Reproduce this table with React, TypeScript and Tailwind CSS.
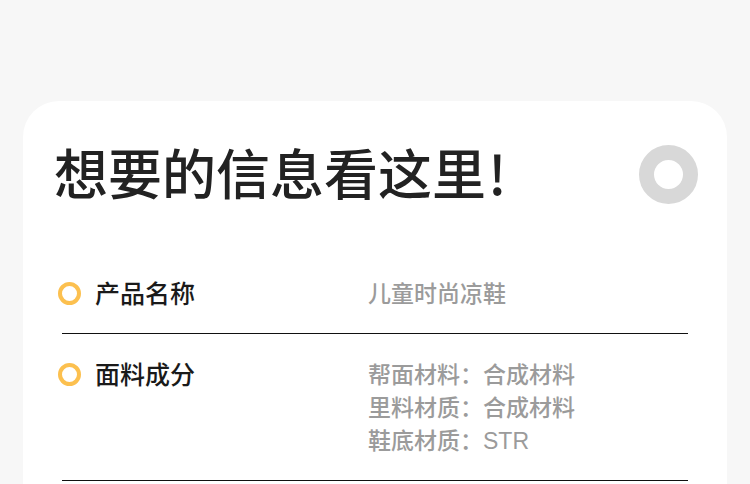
import React from 'react';

const font = { fontFamily: '"Noto Sans CJK SC", "Noto Sans", sans-serif' };
const valueFont = { fontFamily: '"Liberation Sans", "Noto Sans CJK SC", sans-serif' };

interface InfoRow {
    label: string;
    values: string[];
}

const rows: InfoRow[] = [
    { label: '产品名称', values: ['儿童时尚凉鞋'] },
    { label: '面料成分', values: ['帮面材料：合成材料', '里料材质：合成材料', '鞋底材质：STR'] },
];

export default function App() {
    return (
        <div className="h-[484px] w-[750px] overflow-hidden bg-[#f7f7f7]" style={font}>
            <div className="pt-[101px] px-[23px]">
                <div className="bg-white rounded-t-[36px] h-[420px] pt-[38px]">
                    {/* Header */}
                    <div className="flex items-center justify-between h-[65px] pl-[31px] pr-[29px]">
                        <h1 className="text-[54px] leading-none font-medium text-[#222222]">
                            想要的信息看这里<span className="ml-[2px]">!</span>
                        </h1>
                        <div className="w-[59px] h-[59px] rounded-full border-[15px] border-[#d8d8d8] mt-[5px]" />
                    </div>

                    {/* Info rows */}
                    <div className="mt-[49px] ml-[35px] mr-[39px]">
                        {rows.map((row, idx) => (
                            <div key={idx} className="pt-[23px]">
                                <div className="flex items-start">
                                    <div className="flex items-center w-[310px] h-[33px] gap-[14px]">
                                        <div className="w-[23px] h-[23px] rounded-full border-[4px] border-[#fcc04f] mt-[1px]" />
                                        <span className="text-[25px] leading-[33px] font-medium text-[#1a1a1a]">
                                            {row.label}
                                        </span>
                                    </div>
                                    <div className="flex flex-col pt-[2px]" style={valueFont}>
                                        {row.values.map((v, i) => (
                                            <span key={i} className="text-[23px] leading-[33px] font-medium text-[#9b9b9b]">
                                                {v}
                                            </span>
                                        ))}
                                    </div>
                                </div>
                                <div className="mt-[22px] ml-[4px] h-px bg-[#111111]" />
                            </div>
                        ))}
                    </div>
                </div>
            </div>
        </div>
    );
}
